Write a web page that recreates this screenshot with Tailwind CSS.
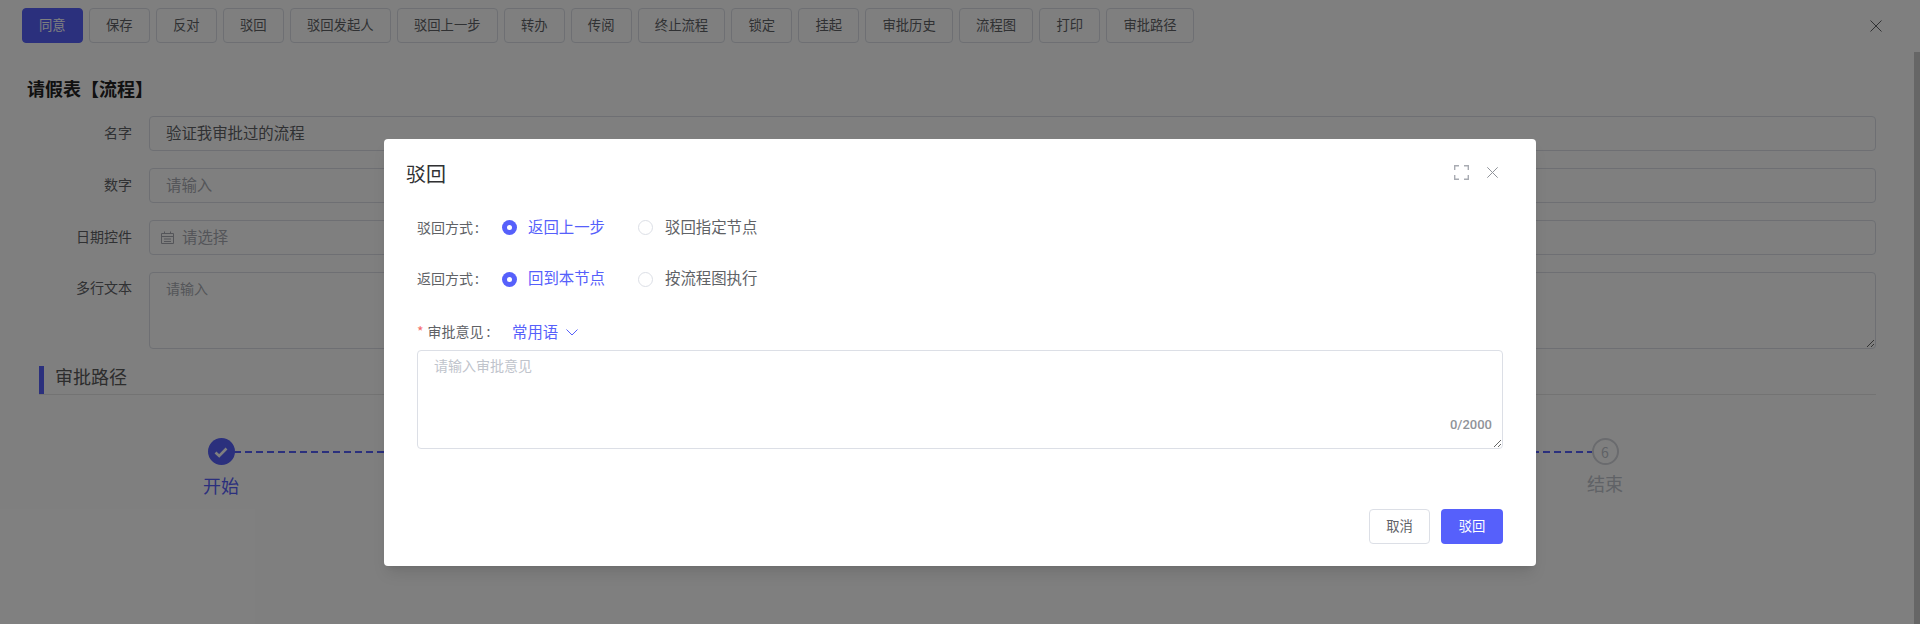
<!DOCTYPE html>
<html lang="zh-CN">
<head>
  <meta charset="UTF-8" />
  <title>请假表</title>
  <script src="https://cdn.jsdelivr.net/npm/@tailwindcss/browser@4"></script>
</head>
<body class="bg-white">
  <div class="relative w-[1920px] h-[624px] overflow-hidden font-['Noto_Sans_CJK_SC','Noto_Sans',sans-serif] text-[#606266]">
    <!-- 工具栏 -->
    <div class="flex items-start justify-between h-[52px] pt-2 pl-[22px] pr-[38px]">
      <div class="flex gap-[6.33px] text-[13.333px]">
        <button class="h-[35px] px-4 pb-px border border-[#5660fb] rounded bg-[#5660fb] text-white">同意</button>
        <button class="h-[35px] px-4 pb-px border border-[#dcdfe6] rounded">保存</button>
        <button class="h-[35px] px-4 pb-px border border-[#dcdfe6] rounded">反对</button>
        <button class="h-[35px] px-4 pb-px border border-[#dcdfe6] rounded">驳回</button>
        <button class="h-[35px] px-4 pb-px border border-[#dcdfe6] rounded">驳回发起人</button>
        <button class="h-[35px] px-4 pb-px border border-[#dcdfe6] rounded">驳回上一步</button>
        <button class="h-[35px] px-4 pb-px border border-[#dcdfe6] rounded">转办</button>
        <button class="h-[35px] px-4 pb-px border border-[#dcdfe6] rounded">传阅</button>
        <button class="h-[35px] px-4 pb-px border border-[#dcdfe6] rounded">终止流程</button>
        <button class="h-[35px] px-4 pb-px border border-[#dcdfe6] rounded">锁定</button>
        <button class="h-[35px] px-4 pb-px border border-[#dcdfe6] rounded">挂起</button>
        <button class="h-[35px] px-4 pb-px border border-[#dcdfe6] rounded">审批历史</button>
        <button class="h-[35px] px-4 pb-px border border-[#dcdfe6] rounded">流程图</button>
        <button class="h-[35px] px-4 pb-px border border-[#dcdfe6] rounded">打印</button>
        <button class="h-[35px] px-4 pb-px border border-[#dcdfe6] rounded">审批路径</button>
      </div>
      <svg class="w-3 h-3 mt-3 text-[#606266]" viewBox="0 0 12 12" fill="none" stroke="currentColor" stroke-width="1"><path d="M.5.5l11 11M11.5.5l-11 11" /></svg>
    </div>

    <div class="flex h-[572px]">
      <!-- 表单 -->
      <div class="flex-1 pl-7 pr-[38px] pt-[24px]">
        <h1 class="h-6 leading-6 mb-[16px] -ml-px text-lg font-bold text-[#222]">请假表【流程】</h1>
        <div class="flex flex-col gap-[17px] text-sm">
          <div class="flex items-center">
            <label class="w-[104px] mr-[17px] pb-[3px] text-right">名字</label>
            <input class="flex-1 h-[35px] px-4 pb-[3px] border border-[#dcdfe6] rounded text-[15.4px]" value="验证我审批过的流程" />
          </div>
          <div class="flex items-center">
            <label class="w-[104px] mr-[17px] pb-[3px] text-right">数字</label>
            <input class="flex-1 h-[35px] px-4 pb-[3px] border border-[#dcdfe6] rounded text-[15.4px] placeholder:text-[#a8abb2]" placeholder="请输入" />
          </div>
          <div class="flex items-center">
            <label class="w-[104px] mr-[17px] pb-[3px] text-right">日期控件</label>
            <div class="flex flex-1 items-center h-[35px] pl-[11px] border border-[#dcdfe6] rounded text-[15.4px] text-[#a8abb2]">
              <svg class="w-[13px] h-[13px] mr-2 text-[#a8abb2]" viewBox="0 0 13 13" fill="none" stroke="currentColor" stroke-width="1"><path d="M.5 2.5h12v10H.5zM.5 5.5h12M3.5.5v2M9.5.5v2M3 8h7M3 10.5h7" /></svg>
              <span class="pb-[3px]">请选择</span>
            </div>
          </div>
          <div class="flex items-start">
            <label class="w-[104px] mr-[17px] mt-[5px] text-right">多行文本</label>
            <textarea class="flex-1 h-[77px] px-4 py-[5px] border border-[#dcdfe6] rounded text-sm placeholder:text-[#a8abb2]" placeholder="请输入"></textarea>
          </div>
        </div>

        <!-- 审批路径 -->
        <div class="flex items-center h-[29px] mt-[17px] ml-[11px] border-b border-[#e6e6e6]">
          <span class="w-[5px] h-7 mr-[11px] bg-[#5660fb]"></span>
          <span class="pb-[8px] text-lg text-[#5a5a5a]">审批路径</span>
        </div>
        <div class="flex items-start mt-[43px] ml-[166px] mr-[244px] px-0">
          <div class="flex flex-col items-center w-[54px]">
            <span class="flex items-center justify-center w-[27px] h-[27px] rounded-full bg-[#5660fb]">
              <svg class="w-[14px] h-[14px] text-white" viewBox="0 0 14 14" fill="none" stroke="currentColor" stroke-width="2.6"><path d="M1.5 7.5l3.7 3.5L12.5 3.5" /></svg>
            </span>
            <span class="mt-[6px] text-lg text-[#5660fb]">开始</span>
          </div>
          <svg class="flex-1 h-[2px] mt-[13px] -mx-[14px]" fill="none"><line x1="0" y1="1" x2="100%" y2="1" stroke="#5660fb" stroke-width="2" stroke-dasharray="7 4" /></svg>
          <div class="flex flex-col items-center w-[54px]">
            <span class="flex items-center justify-center w-[27px] h-[27px] rounded-full border-2 border-[#d4d6dc] text-[#c0c4cc] text-sm">6</span>
            <span class="mt-[4px] text-lg text-[#c0c4cc]">结束</span>
          </div>
        </div>
      </div>
      <!-- 滚动条 -->
      <div class="w-[6px] bg-[#cdcdcd]"></div>
    </div>

    <!-- 遮罩 + 弹窗 -->
    <div class="absolute inset-0 flex justify-center pt-[139px] bg-black/50">
      <div class="flex flex-col w-[1152px] h-[427px] rounded bg-white shadow-lg">
        <div class="flex items-center justify-between h-[71px] pl-[22px] pr-[38px]">
          <span class="pb-[2px] text-xl leading-none text-[#303133]">驳回</span>
          <div class="flex items-center gap-[18px] -mt-1">
            <svg class="w-[15px] h-[15px] text-[#a8abb2]" viewBox="0 0 15 15" fill="none" stroke="currentColor" stroke-width="1.4"><path d="M5 .7H.7V5M10 .7h4.3V5M5 14.3H.7V10M10 14.3h4.3V10" /></svg>
            <svg class="w-[11px] h-[11px] text-[#909399]" viewBox="0 0 11 11" fill="none" stroke="currentColor" stroke-width="1"><path d="M.3.3l10.4 10.4M10.7.3L.3 10.7" /></svg>
          </div>
        </div>

        <div class="px-[33px] text-sm">
          <div class="flex items-center h-[35px] mb-[17px]">
            <span class="w-[85px] pb-[2px]">驳回方式<span class="ml-[2px]">:</span></span>
            <div class="flex items-center w-[136px] text-[15.4px] text-[#5660fb]">
              <span class="flex items-center justify-center w-[15px] h-[15px] mr-[11px] rounded-full bg-[#5660fb]"><span class="w-[5px] h-[5px] rounded-full bg-white"></span></span><span class="pb-[3px]">返回上一步</span>
            </div>
            <div class="flex items-center text-[15.4px]">
              <span class="w-[15px] h-[15px] mr-3 rounded-full border border-[#dcdfe6]"></span><span class="pb-[3px]">驳回指定节点</span>
            </div>
          </div>
          <div class="flex items-center h-[35px] mb-[17px]">
            <span class="w-[85px] pb-[4px]">返回方式<span class="ml-[2px]">:</span></span>
            <div class="flex items-center w-[136px] text-[15.4px] text-[#5660fb]">
              <span class="flex items-center justify-center w-[15px] h-[15px] mr-[11px] rounded-full bg-[#5660fb]"><span class="w-[5px] h-[5px] rounded-full bg-white"></span></span><span class="pb-[5px]">回到本节点</span>
            </div>
            <div class="flex items-center text-[15.4px]">
              <span class="w-[15px] h-[15px] mr-3 rounded-full border border-[#dcdfe6]"></span><span class="pb-[5px]">按流程图执行</span>
            </div>
          </div>
          <div class="flex items-center h-[36px]">
            <span class="w-[95px] pb-[2px]"><span class="mr-1 text-[#f56c6c]">*</span>审批意见<span class="ml-[3px]">:</span></span>
            <span class="pb-[2px] text-[15.4px] text-[#5660fb]">常用语</span>
            <svg class="w-3 h-[7px] ml-2 text-[#5660fb]" viewBox="0 0 12 7" fill="none" stroke="currentColor" stroke-width="1"><path d="M.5.5L6 6l5.5-5.5" /></svg>
          </div>
          <div class="relative flex">
            <textarea class="flex-1 h-[99px] px-4 py-[4px] border border-[#dcdfe6] rounded text-sm placeholder:text-[#c0c4cc]" placeholder="请输入审批意见"></textarea>
            <span class="absolute right-[11px] bottom-[14px] font-['Roboto',sans-serif] font-medium text-[13px] text-[#909399]">0/2000</span>
          </div>
        </div>

        <div class="flex justify-end gap-[11px] mt-auto pr-[33px] pb-[22px] text-[13.333px]">
          <button class="w-[61px] h-[35px] pb-px border border-[#dcdfe6] rounded">取消</button>
          <button class="w-[62px] h-[35px] pb-px rounded bg-[#5660fb] text-white">驳回</button>
        </div>
      </div>
    </div>
  </div>
</body>
</html>
